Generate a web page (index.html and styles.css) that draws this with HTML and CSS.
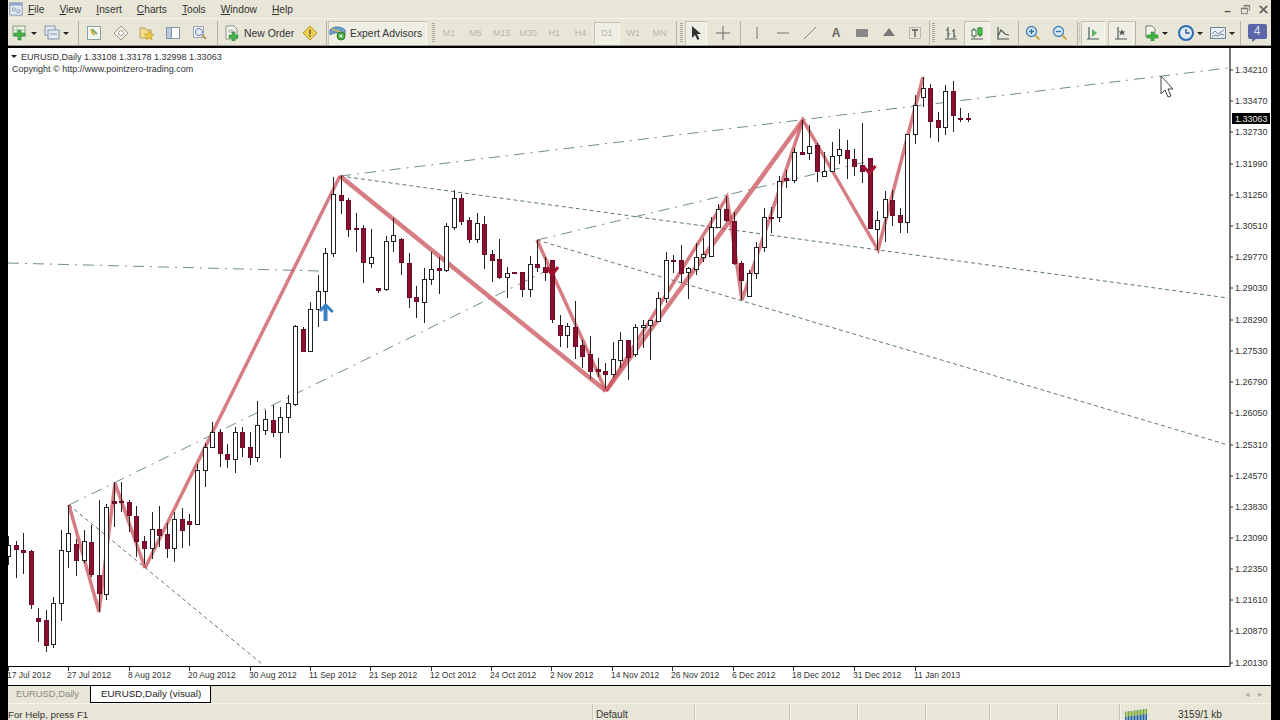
FILE: index.html
```html
<!DOCTYPE html>
<html lang="en">
<head>
    <meta charset="UTF-8">
    <title>MetaTrader - EURUSD,Daily</title>
    <link rel="stylesheet" href="styles.css">
</head>
<body>

<div id="app">
    <div id="menubar">
        <svg class="app-icon" viewBox="0 0 16 16"><rect x="1" y="1" width="14" height="14" fill="#dfe8f2" stroke="#7f93ad"/><rect x="1" y="1" width="14" height="3" fill="#8fa6c4"/><path d="M4 7h3v3H4zM9 9h3v3H9z" fill="#fff" stroke="#7f93ad"/></svg>
        <span class="menu-item"><u>F</u>ile</span>
        <span class="menu-item"><u>V</u>iew</span>
        <span class="menu-item"><u>I</u>nsert</span>
        <span class="menu-item"><u>C</u>harts</span>
        <span class="menu-item"><u>T</u>ools</span>
        <span class="menu-item"><u>W</u>indow</span>
        <span class="menu-item"><u>H</u>elp</span>
        <div class="win-controls">
            <span class="win-btn">&#8211;</span>
            <svg class="win-btn" viewBox="0 0 12 12"><path d="M4 1.5h6.500v5H9M1.500 4.500H8v6H1.500z" fill="none" stroke="#777"/><path d="M4 2h6.500M1.500 5H8" stroke="#777" stroke-width="1.500"/></svg>
            <svg class="win-btn" viewBox="0 0 12 12"><path d="M2 2l8 8M10 2l-8 8" stroke="#666" stroke-width="2"/></svg>
        </div>
    </div>

    <div id="toolbar">
        <span class="tb drop w28 ml4">
            <svg viewBox="0 0 16 16"><rect x="1" y="1" width="12" height="10" fill="#eef3e4" stroke="#8a9a8a"/><path d="M1 5h12M5 1v10" stroke="#b5c2b0"/><path d="M6 5h3v3h4v3H9v4H6v-4H2V8h4z" fill="#46b04a" stroke="#2f8a33" stroke-width=".6"/></svg>
            <i class="arrow"></i>
        </span>
        <span class="tb drop w28 ml4">
            <svg viewBox="0 0 16 16"><rect x="1" y="1" width="10" height="9" fill="#e4eaf2" stroke="#8494a8"/><rect x="4" y="5" width="11" height="9" fill="#e4eaf2" stroke="#8494a8"/><path d="M6 9h7" stroke="#8494a8"/></svg>
            <i class="arrow"></i>
        </span>
        <span class="sep ml6"></span>

        <span class="tb w26h ml2"><svg viewBox="0 0 16 16"><rect x="1.500" y="1.500" width="13" height="13" fill="#f4f7f2" stroke="#8fa0a0"/><path d="M4 5l3 2-1 1 3 2" fill="none" stroke="#d9a11e" stroke-width="1.500"/><path d="M6 4l5 5" stroke="#4a9a58" stroke-width="1.500"/></svg></span>
        <span class="tb w26h"><svg viewBox="0 0 16 16"><path d="M8 1l7 7-7 7-7-7z" fill="#f1efe4" stroke="#9a9a90"/><circle cx="8" cy="8" r="2.500" fill="#fff" stroke="#a0a098"/></svg></span>
        <span class="tb w26h"><svg viewBox="0 0 16 16"><path d="M1 3h5l1 2h5v8H1z" fill="#f3dc8e" stroke="#b5a055"/><path d="M10 6l1.600 3 3.200.4-2.300 2.200.6 3.200-3-1.600-3 1.600.6-3.200-2.300-2.200 3.200-.4z" fill="#f0c93e" stroke="#b8962a" stroke-width=".6"/></svg></span>
        <span class="tb w26h"><svg viewBox="0 0 16 16"><rect x="1.500" y="2.500" width="13" height="11" fill="#fff" stroke="#8494a8"/><rect x="1.500" y="2.500" width="5" height="11" fill="#b9c9de" stroke="#8494a8"/></svg></span>
        <span class="tb w26h"><svg viewBox="0 0 16 16"><rect x="1.500" y="1.500" width="10" height="11" fill="#eef0f6" stroke="#9aa3b5"/><circle cx="7" cy="7" r="3.500" fill="#e6ebf7" stroke="#6d7fb0"/><path d="M10 10l4 4" stroke="#b79a55" stroke-width="2"/></svg></span>
        <span class="sep ml4"></span>

        <span class="tb order ml6">
            <svg viewBox="0 0 16 16"><path d="M2 1h8l3 3v10H2z" fill="#f7f8f4" stroke="#8a9288"/><path d="M4 5h5M4 7h7" stroke="#a0a89e"/><path d="M8 7h3v3h3v3h-3v3H8v-3H5v-3h3z" fill="#46b04a" stroke="#2f8a33" stroke-width=".6"/></svg>
            <span class="tb-label">New Order</span>
        </span>
        <span class="tb w26"><svg viewBox="0 0 16 16"><path d="M8 1l7 7-7 7-7-7z" fill="#f2cf52" stroke="#b2962e"/><path d="M8 4.500v5M8 10.500v1.500" stroke="#5d5a2c" stroke-width="1.400"/></svg></span>
        <span class="sep ml3"></span>
        <span class="tb expert ml1 pressed">
            <svg viewBox="0 0 18 16"><path d="M1 5c3-4 11-4 15 0v5c-4-3-11-3-15 0z" fill="#6a9fc9" stroke="#4c7ba3"/><path d="M3 4l11 4" stroke="#d8b45a" stroke-width="1.500"/><circle cx="12" cy="11" r="4" fill="#54b048" stroke="#357a30"/><circle cx="12" cy="11" r="1.500" fill="#e7f4dd"/></svg>
            <span class="tb-label">Expert Advisors</span>
        </span>
        <span class="grip ml5"></span>

        <span class="tf ml1">M1</span><span class="tf">M5</span><span class="tf">M15</span><span class="tf">M30</span><span class="tf">H1</span><span class="tf">H4</span><span class="tf pressed">D1</span><span class="tf">W1</span><span class="tf">MN</span>
        <span class="sep ml3"></span>
        <span class="grip ml3"></span>

        <span class="tb w22 ml2 pressed"><svg viewBox="0 0 16 16"><path d="M4 1v12l3-3 2.500 5 2-1-2.500-5h4z" fill="#333"/></svg></span>
        <span class="tb w26 ml3"><svg viewBox="0 0 16 16"><path d="M8 1v14M1 8h14" stroke="#666"/></svg></span>
        <span class="sep ml4"></span>

        <span class="tb w26h ml3"><svg viewBox="0 0 16 16"><path d="M8 2v12" stroke="#777"/></svg></span>
        <span class="tb w26h"><svg viewBox="0 0 16 16"><path d="M2 8h12" stroke="#777"/></svg></span>
        <span class="tb w26h"><svg viewBox="0 0 16 16"><path d="M2 14L14 2" stroke="#888"/></svg></span>
        <span class="tb w26h tool-a">A</span>
        <span class="tb w26h"><svg viewBox="0 0 16 16"><rect x="2" y="4" width="12" height="8" rx="1" fill="#888"/></svg></span>
        <span class="tb w26h"><svg viewBox="0 0 16 16"><path d="M8 3l6 8H2z" fill="#777"/></svg></span>
        <span class="tb w26h"><svg viewBox="0 0 16 16"><rect x="2.500" y="2.500" width="11" height="11" fill="none" stroke="#888" stroke-dasharray="1 1"/><path d="M5 5h6M8 5v7" stroke="#555" stroke-width="1.300"/></svg></span>
        <span class="sep ml1"></span>
        <span class="grip ml2"></span>

        <span class="tb w26h ml2"><svg viewBox="0 0 16 16"><path d="M2 14h12M5 2v11M3 5h2M5 9h2M11 4v9M9 6h2M11 11h2" fill="none" stroke="#4c5a5a" stroke-width="1.200"/></svg></span>
        <span class="tb w26h pressed"><svg viewBox="0 0 16 16"><path d="M2 14h12M5 3v10M11 2v10" stroke="#4c5a5a"/><rect x="3" y="5" width="4" height="6" fill="#fff" stroke="#3a6b3a"/><rect x="9" y="3" width="4" height="7" fill="#4cc44c" stroke="#2d8a2d"/></svg></span>
        <span class="tb w26h"><svg viewBox="0 0 16 16"><path d="M2 14h12M3 2v12M3 11l3-6 4 4 4 1" fill="none" stroke="#4c5a5a" stroke-width="1.200"/></svg></span>
        <span class="sep ml1"></span>

        <span class="tb w27 ml1"><svg viewBox="0 0 16 16"><circle cx="6.500" cy="6.500" r="5" fill="#d8eaf8" stroke="#4a85b8" stroke-width="1.400"/><path d="M4 6.500h5M6.500 4v5" stroke="#2e6fa8" stroke-width="1.400"/><path d="M10.500 10.500l4 4" stroke="#c9a856" stroke-width="2.200"/></svg></span>
        <span class="tb w27"><svg viewBox="0 0 16 16"><circle cx="6.500" cy="6.500" r="5" fill="#d8eaf8" stroke="#4a85b8" stroke-width="1.400"/><path d="M4 6.500h5" stroke="#2e6fa8" stroke-width="1.400"/><path d="M10.500 10.500l4 4" stroke="#c9a856" stroke-width="2.200"/></svg></span>
        <span class="sep ml3"></span>
        <span class="grip thin ml1"></span>

        <span class="tb w24 ml1 pressed"><svg viewBox="0 0 16 16"><path d="M2 14h12M4 2v12" stroke="#4c5a5a" stroke-width="1.200"/><path d="M7 4l5 4-5 4z" fill="#5fb36a"/></svg></span>
        <span class="tb w26 ml3 pressed"><svg viewBox="0 0 16 16"><path d="M2 14h12M5 2v12" stroke="#4c5a5a" stroke-width="1.200"/><path d="M9 4l1 2.500h2.500L10.500 8l1 2.500-2.500-1.500-2.500 1.500 1-2.500L5.500 6.500H8z" fill="#4c5a5a"/></svg></span>
        <span class="sep ml1"></span>

        <span class="tb drop w24 ml7">
            <svg viewBox="0 0 16 16"><path d="M3 1h6l3 3v8H3z" fill="#f5f5ee" stroke="#77807a"/><path d="M8 7h3v3h4v3h-4v3H8v-3H4v-3h4z" fill="#3fb243" stroke="#2b8a33" stroke-width=".6"/></svg>
            <i class="arrow"></i>
        </span>
        <span class="tb drop w24 ml11">
            <svg viewBox="0 0 16 16"><circle cx="8" cy="8" r="7" fill="#dfe9f5" stroke="#2f6eb2" stroke-width="2"/><path d="M8 4v4h3.500" fill="none" stroke="#27527f" stroke-width="1.300"/></svg>
            <i class="arrow"></i>
        </span>
        <span class="tb drop w26 ml8">
            <svg viewBox="0 0 16 16"><rect x=".5" y="2.500" width="15" height="11" fill="#e8eff5" stroke="#71879c"/><path d="M2 9l3-3 3 3 3-2 3-2M2 12l3-2 3 1 3-2 3 1" fill="none" stroke="#71879c"/></svg>
            <i class="arrow"></i>
        </span>
        <span class="sep ml4"></span>
        <span class="mail ml7">4</span>
    </div>

    <svg id="chart" viewBox="8 48 1263 637"></svg>

    <div id="tabs">
        <span class="tab">EURUSD,Daily</span>
        <span class="tab active">EURUSD,Daily (visual)</span>
        <span class="tab-scroll">&#9666;&nbsp;&nbsp;&nbsp;&#9656;</span>
    </div>

    <div id="statusbar">
        <span class="cell help">For Help, press F1</span>
        <span class="cell w102">Default</span>
        <span class="cell w95"></span>
        <span class="cell w68"></span>
        <span class="cell w68"></span>
        <span class="cell w64"></span>
        <span class="cell w68"></span>
        <span class="cell w62"></span>
        <span class="cell conn">
            <svg viewBox="0 0 24 12"><path d="M1 3l22-3v12H1z" fill="#1f5fa8"/><path d="M1 3l22-3v5L1 8z" fill="#79a832"/><path d="M3 0v12M6 0v12M9 0v12M12 0v12M15 0v12M18 0v12M21 0v12" stroke="#e8e6d6"/></svg>
            <span class="conn-text">3159/1 kb</span>
        </span>
    </div>
</div>

<script src="chart.js"></script>
</body>
</html>
```

FILE: styles.css
```css
* {
    box-sizing: border-box;
}
body {
    margin: 0;
    background: #000;
    font-family: "Liberation Sans", Arial, sans-serif;
    font-size: 10px;
    color: #222;
    overflow: hidden;
}
#app {
    width: 1263px;
    height: 720px;
    margin-left: 8px;
    display: flex;
    flex-direction: column;
    background: #e8e6d7;
}

/* menu */
#menubar {
    height: 18px;
    display: flex;
    align-items: center;
    padding-left: 1px;
    flex: none;
}
.app-icon {
    width: 14px;
    height: 14px;
    margin-right: 5px;
}
.menu-item {
    margin-right: 15px;
    font-size: 10.200px;
    color: #333;
}
.win-controls {
    margin-left: auto;
    display: flex;
    align-items: center;
    gap: 7px;
    padding-right: 2px;
}
.win-btn {
    width: 11px;
    height: 11px;
    font-size: 12px;
    font-weight: bold;
    line-height: 14px;
    text-align: center;
    color: #555;
}

/* toolbar */
#toolbar {
    height: 30px;
    flex: none;
    display: flex;
    align-items: center;
    padding: 2px 0 1px;
    border-top: 1px solid #f6f5ec;
    border-bottom: 2px solid #000;
    box-shadow: inset 0 -1px 0 #9b9a8e;
}
.tb {
    height: 24px;
    display: flex;
    align-items: center;
    justify-content: center;
    flex: none;
}
.tb svg {
    width: 16px;
    height: 16px;
    flex: none;
}
.tb.drop {
    justify-content: flex-start;
    gap: 3px;
}
.arrow {
    width: 0;
    height: 0;
    border: 3px solid transparent;
    border-top: 3px solid #222;
    border-bottom: 0;
}
.w22 { width: 22px; }
.w24 { width: 24px; }
.w26 { width: 26px; }
.w26h { width: 26.400px; }
.w27 { width: 27px; }
.w28 { width: 28px; }
.ml1 { margin-left: 1px; }
.ml2 { margin-left: 2px; }
.ml3 { margin-left: 3px; }
.ml4 { margin-left: 4px; }
.ml5 { margin-left: 5px; }
.ml6 { margin-left: 6px; }
.ml7 { margin-left: 7px; }
.ml8 { margin-left: 8px; }
.ml11 { margin-left: 11px; }
.sep {
    width: 1px;
    height: 24px;
    background: #b4b3a6;
    flex: none;
}
.grip {
    width: 3px;
    height: 20px;
    flex: none;
    background: repeating-linear-gradient(to bottom, #a9a89c 0 1px, transparent 1px 2px);
}
.grip.thin {
    width: 1px;
}
.pressed {
    background: #efeee4;
    box-shadow: inset 1px 1px 0 #c4c3b6, inset -1px -1px 0 #f8f7f0;
}
.order {
    width: 73px;
    justify-content: flex-start;
    gap: 4px;
}
.expert {
    width: 99px;
    justify-content: flex-start;
    padding-left: 1px;
    gap: 3px;
}
.expert svg {
    width: 18px;
}
.tb-label {
    font-size: 10.400px;
    color: #333;
    white-space: nowrap;
}
.tf {
    width: 26.300px;
    height: 22px;
    line-height: 22px;
    text-align: center;
    font-size: 9px;
    color: #b9b8ab;
    flex: none;
}
.tool-a {
    font-size: 12px;
    font-weight: bold;
    color: #666;
}
.mail {
    width: 19px;
    height: 15px;
    margin-bottom: 3px;
    line-height: 15px;
    text-align: center;
    font-size: 12px;
    color: #dfe2f2;
    background: #5a66a8;
    border-radius: 2px;
    flex: none;
    position: relative;
}
.mail::after {
    content: "";
    position: absolute;
    left: 4px;
    bottom: -3px;
    border-left: 4px solid #5a66a8;
    border-bottom: 3px solid transparent;
}

/* chart, everything in it is drawn by chart.js */
#chart {
    flex: none;
    width: 1263px;
    height: 637px;
    display: block;
    background: #fff;
}
#chart text {
    font-family: "Liberation Sans", Arial, sans-serif;
    font-size: 9px;
    fill: #333;
}
#chart .date-label {
    font-size: 8.500px;
}
#chart .last-price {
    fill: #e8e8e8;
}
.frame {
    stroke: #000;
    stroke-width: 1;
}
.frame-right {
    stroke: #777;
    stroke-width: 2;
}
.tick {
    stroke: #333;
    stroke-width: 1;
}
.wick {
    stroke: #222;
    stroke-width: 1;
}
.bull {
    fill: #fff;
    stroke: #222;
    stroke-width: 1;
}
.bear {
    fill: #8a1030;
    stroke: #6c0c26;
    stroke-width: 1;
}
.zig {
    fill: none;
    stroke: #c8505a;
    stroke-opacity: .75;
    stroke-width: 3.500;
    stroke-linejoin: miter;
}
.zig-thick {
    stroke-width: 4.500;
}
.trend {
    fill: none;
    stroke: #6f8f8a;
    stroke-width: 1;
    stroke-dasharray: 11 6 2 6;
}
.fibo {
    fill: none;
    stroke: #5a7a72;
    stroke-width: 1;
    stroke-dasharray: 4 3;
}
.arrow-up {
    fill: none;
    stroke: #3b7fc4;
    stroke-width: 3;
}
.arrow-down {
    fill: none;
    stroke: #a5102e;
    stroke-width: 3;
}
.stem {
    stroke-width: 4;
}
.cursor {
    fill: #fff;
    stroke: #444;
    stroke-width: 1;
}

/* tabs */
#tabs {
    height: 19px;
    flex: none;
    display: flex;
    align-items: flex-start;
    border-top: 1px solid #000;
    border-bottom: 1px solid #f6f5ec;
}
.tab {
    height: 17px;
    line-height: 15px;
    padding: 0 0 0 8px;
    width: 82px;
    color: #8d8d82;
    font-size: 9.400px;
    white-space: nowrap;
}
.tab.active {
    width: 121px;
    padding-left: 10px;
    font-size: 9.800px;
    color: #222;
    background: #fff;
    border: 1px solid #000;
    border-top: 0;
}
.tab-scroll {
    margin-left: auto;
    margin-right: 8px;
    color: #b2b1a5;
    font-size: 9px;
    line-height: 16px;
}

/* status bar */
#statusbar {
    flex: 1;
    display: flex;
    overflow: hidden;
}
.cell {
    flex: none;
    height: 100%;
    line-height: 21px;
    font-size: 10px;
    color: #333;
    padding-left: 3px;
    border-left: 1px solid #c6c5b8;
    box-shadow: inset 1px 0 0 #f6f5ec;
    white-space: nowrap;
}
.cell.help {
    width: 584px;
    padding-left: 0;
    font-size: 9.700px;
    border-left: 0;
    box-shadow: none;
}
.w102 { width: 102px; }
.w95 { width: 95px; }
.w68 { width: 68px; }
.w64 { width: 64px; }
.w62 { width: 62px; }
.cell.conn {
    flex: 1;
    display: flex;
    align-items: flex-start;
    padding-left: 4px;
}
.conn svg {
    width: 24px;
    height: 12px;
    margin-top: 5px;
}
.conn-text {
    margin-left: 30px;
}
```

FILE: chart.js
```js
// all coordinates are page pixels, the svg viewBox starts at 8,48
const SVG_NS = 'http://www.w3.org/2000/svg';
const chart = document.getElementById('chart');
const BAR_STEP = 7.558;

// high, low, body top, body bottom, w = white candle / r = red candle
const candles = [
    [536, 565, 545, 556, 'w'], [541, 578, 545, 549, 'r'], [533, 574, 550, 552, 'r'], [550, 609, 551, 604, 'r'],
    [608, 642, 618, 621, 'r'], [610, 652, 620, 645, 'r'], [597, 648, 603, 644, 'w'], [530, 621, 550, 603, 'w'],
    [505, 568, 533, 551, 'w'], [539, 576, 544, 560, 'r'], [530, 563, 541, 560, 'w'], [525, 577, 542, 574, 'r'],
    [500, 612, 575, 593, 'r'], [504, 600, 507, 594, 'w'], [482, 527, 501, 503, 'r'], [482, 512, 501, 502, 'r'],
    [500, 532, 502, 515, 'r'], [506, 557, 516, 541, 'r'], [536, 564, 541, 548, 'r'], [512, 559, 529, 548, 'w'],
    [506, 547, 529, 535, 'r'], [523, 558, 534, 548, 'r'], [512, 562, 519, 548, 'w'], [508, 548, 519, 530, 'r'],
    [514, 546, 521, 524, 'r'], [464, 525, 470, 524, 'w'], [443, 487, 447, 470, 'w'], [422, 448, 432, 447, 'w'],
    [429, 467, 432, 453, 'r'], [444, 468, 454, 459, 'r'], [427, 473, 432, 459, 'w'], [427, 457, 432, 447, 'r'],
    [432, 465, 447, 457, 'r'], [401, 462, 425, 457, 'w'], [410, 435, 419, 430, 'w'], [405, 437, 420, 432, 'r'],
    [407, 458, 417, 432, 'w'], [395, 433, 403, 417, 'w'], [325, 406, 326, 404, 'w'], [327, 352, 329, 351, 'r'],
    [302, 352, 309, 351, 'w'], [275, 327, 291, 309, 'w'], [248, 310, 253, 291, 'w'], [177, 257, 194, 253, 'w'],
    [176, 214, 195, 200, 'r'], [198, 237, 200, 229, 'r'], [213, 252, 228, 229, 'r'], [225, 283, 228, 262, 'r'],
    [229, 268, 257, 263, 'w'], [288, 293, 288, 290, 'r'], [236, 291, 241, 289, 'w'], [218, 252, 235, 241, 'w'],
    [238, 275, 239, 262, 'r'], [253, 308, 263, 297, 'r'], [286, 318, 297, 301, 'r'], [268, 323, 279, 302, 'w'],
    [252, 285, 269, 279, 'w'], [257, 294, 268, 270, 'r'], [223, 272, 226, 270, 'w'], [190, 230, 198, 227, 'w'],
    [194, 225, 198, 221, 'r'], [217, 243, 220, 239, 'r'], [213, 243, 223, 239, 'w'], [216, 269, 224, 254, 'r'],
    [250, 282, 254, 260, 'r'], [239, 279, 259, 277, 'r'], [267, 298, 273, 277, 'w'], [272, 274, 272, 273, 'r'],
    [272, 297, 272, 289, 'r'], [256, 297, 264, 289, 'w'], [240, 272, 264, 267, 'r'], [257, 281, 267, 272, 'r'],
    [260, 323, 260, 319, 'r'], [315, 347, 325, 335, 'r'], [323, 348, 326, 335, 'w'], [301, 359, 327, 346, 'r'],
    [340, 368, 345, 356, 'r'], [336, 379, 354, 371, 'r'], [358, 377, 369, 371, 'r'], [363, 388, 371, 374, 'r'],
    [342, 377, 359, 374, 'w'], [332, 368, 340, 360, 'w'], [340, 380, 340, 357, 'r'], [324, 357, 327, 354, 'w'],
    [320, 348, 325, 327, 'w'], [321, 360, 320, 325, 'w'], [292, 322, 298, 321, 'w'], [252, 303, 260, 298, 'w'],
    [255, 273, 260, 261, 'r'], [245, 283, 260, 273, 'r'], [267, 299, 268, 272, 'w'], [243, 275, 257, 269, 'w'],
    [238, 262, 254, 257, 'w'], [217, 257, 227, 256, 'w'], [204, 228, 209, 227, 'w'], [196, 222, 209, 220, 'r'],
    [212, 265, 221, 263, 'r'], [261, 300, 263, 280, 'r'], [270, 297, 273, 296, 'w'], [242, 279, 247, 273, 'w'],
    [208, 252, 217, 247, 'w'], [207, 233, 217, 218, 'r'], [176, 222, 181, 217, 'w'], [170, 188, 178, 180, 'r'],
    [148, 183, 152, 180, 'w'], [120, 153, 152, 154, 'r'], [125, 160, 146, 153, 'w'], [143, 182, 145, 171, 'r'],
    [152, 177, 171, 176, 'w'], [142, 172, 156, 171, 'w'], [129, 164, 149, 155, 'w'], [140, 179, 150, 158, 'r'],
    [149, 176, 159, 166, 'r'], [123, 183, 165, 171, 'r'], [158, 228, 158, 228, 'r'], [211, 250, 220, 229, 'w'],
    [191, 242, 199, 217, 'w'], [190, 226, 200, 215, 'r'], [208, 233, 215, 222, 'r'], [134, 233, 134, 222, 'w'],
    [95, 144, 105, 134, 'w'], [77, 107, 88, 97, 'w'], [84, 138, 88, 121, 'r'], [112, 142, 120, 127, 'r'],
    [85, 135, 91, 127, 'w'], [81, 132, 91, 115, 'r'], [108, 122, 118, 119, 'r'], [113, 122, 118, 119, 'r']
];

const prices = [
    ['1.34210', 70], ['1.33470', 101], ['1.32730', 132], ['1.31990', 164], ['1.31250', 195],
    ['1.30510', 226], ['1.29770', 257], ['1.29030', 288], ['1.28290', 320], ['1.27530', 351],
    ['1.26790', 382], ['1.26050', 413], ['1.25310', 445], ['1.24570', 476], ['1.23830', 507],
    ['1.23090', 538], ['1.22350', 569], ['1.21610', 600], ['1.20870', 631], ['1.20130', 663]
];

const dates = [
    ['17 Jul 2012', 8], ['27 Jul 2012', 68], ['8 Aug 2012', 129], ['20 Aug 2012', 189],
    ['30 Aug 2012', 250], ['11 Sep 2012', 310], ['21 Sep 2012', 370], ['12 Oct 2012', 431],
    ['24 Oct 2012', 491], ['2 Nov 2012', 551], ['14 Nov 2012', 612], ['26 Nov 2012', 672],
    ['6 Dec 2012', 733], ['18 Dec 2012', 793], ['31 Dec 2012', 854], ['11 Jan 2013', 915]
];

function add(tag, attrs, text) {
    const el = document.createElementNS(SVG_NS, tag);
    for (const key in attrs) {
        el.setAttribute(key, attrs[key]);
    }
    if (text) {
        el.textContent = text;
    }
    chart.appendChild(el);
    return el;
}

function line(x1, y1, x2, y2, cls) {
    add('line', { x1, y1, x2, y2, class: cls });
}

function poly(points, cls) {
    add('polyline', { points, class: cls });
}

// trend lines
line(340, 176, 1228, 68, 'trend');
line(8, 263, 320, 271, 'trend');
line(69, 505, 548, 270, 'trend');
line(537, 240, 870, 161, 'trend');
line(340, 176, 1228, 298, 'fibo');
line(537, 240, 1228, 445, 'fibo');
line(69, 505, 262, 664, 'fibo');

// zigzags
poly('69,505 99,612 115,483 145,568', 'zig');
poly('145,568 340,176', 'zig');
poly('340,176 606,391', 'zig zig-thick');
poly('537,240 606,391', 'zig');
poly('606,391 803,120', 'zig zig-thick');
poly('606,391 727,197 742,300 803,120 878,250 923,77', 'zig');

// candles
candles.forEach((c, i) => {
    const x = Math.round(8 + BAR_STEP * i) + 0.5;
    line(x, c[0], x, c[1], 'wick');
    const top = Math.min(c[2], c[3]);
    const h = Math.max(Math.abs(c[3] - c[2]), 1);
    add('rect', { x: x - 2, y: top + 0.5, width: 4, height: h, class: c[4] === 'w' ? 'bull' : 'bear' });
});

// signal arrows
add('path', { d: 'M325.500 321V306', class: 'arrow-up stem' });
add('path', { d: 'M320 311l5.700-6 7 7', class: 'arrow-up' });
add('path', { d: 'M547 267l5 8 6-8', class: 'arrow-down' });
add('path', { d: 'M863 166l6.500 7 6-7', class: 'arrow-down' });

// legend
add('path', { d: 'M11 55h6l-3 3z', fill: '#222' });
add('text', { x: 21, y: 60 }, 'EURUSD,Daily  1.33108 1.33178 1.32998 1.33063');
add('text', { x: 12, y: 72 }, 'Copyright © http://www.pointzero-trading.com');

// frame and axes
line(8, 666.5, 1230, 666.5, 'frame');
line(1230, 48, 1230, 667, 'frame-right');

prices.forEach(p => {
    line(1230, p[1], 1233, p[1], 'tick');
    add('text', { x: 1235, y: p[1] + 3 }, p[0]);
});
dates.forEach(d => {
    line(d[1] + 0.5, 667, d[1] + 0.5, 671, 'tick');
    add('text', { x: d[1] - 1, y: 678, class: 'date-label' }, d[0]);
});

add('rect', { x: 1232, y: 113, width: 38, height: 11, fill: '#000' });
add('text', { x: 1235, y: 122, class: 'last-price' }, '1.33063');

// mouse pointer
add('path', { d: 'M1161 76v18l4-4 3 7 3-1-3-7h5z', class: 'cursor' });
```
